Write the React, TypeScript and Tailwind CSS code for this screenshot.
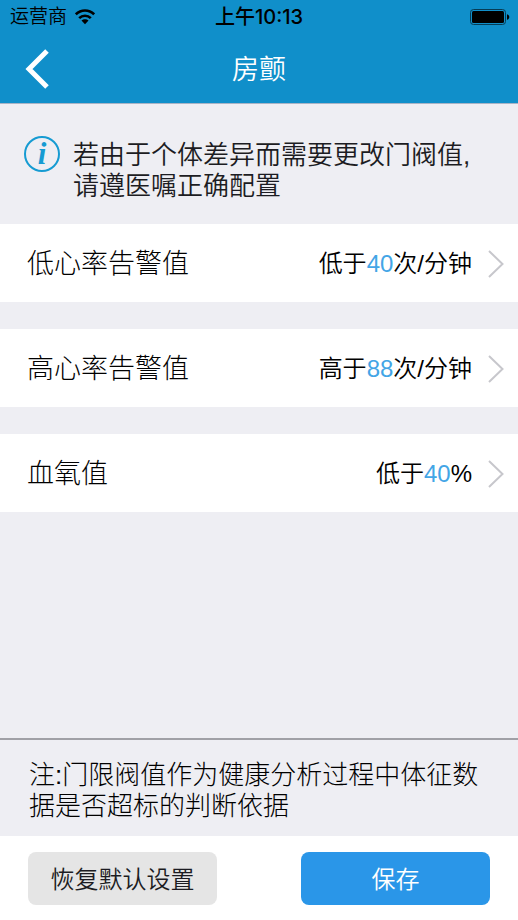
import React, { useState } from 'react';

interface Threshold {
  id: string;
  label: string;
  prefix: string;
  value: number;
  unit: string;
}

const defaults: Threshold[] = [
  { id: 'low', label: '低心率告警值', prefix: '低于', value: 40, unit: '次/分钟' },
  { id: 'high', label: '高心率告警值', prefix: '高于', value: 88, unit: '次/分钟' },
  { id: 'spo2', label: '血氧值', prefix: '低于', value: 40, unit: '%' },
];

const StatusBar = () => (
  <div className="grid grid-cols-[1fr_auto_1fr] items-center h-[34px] px-2 text-[19px] leading-[34px] text-black font-['Inter','Noto_Sans_CJK_SC',sans-serif]">
    <div className="flex items-center gap-2 pl-0.5">
      <span className="font-[350]">运营商</span>
      <svg className="w-5 h-4" viewBox="0 0 20 16" fill="none" stroke="currentColor" aria-hidden="true">
        <path d="M.8 5.400C6 .2 14 .2 19.200 5.400" strokeWidth="2.700" />
        <path d="M4.200 9.200c3.200-3.200 8.400-3.200 11.600 0" strokeWidth="2.600" />
        <path d="M10 15.200 6.500 11.600c1.900-1.900 5.100-1.900 7 0z" fill="currentColor" stroke="none" />
      </svg>
    </div>
    <div className="text-center text-xl leading-[34px] font-medium whitespace-nowrap">上午10:13</div>
    <svg className="w-10 h-4 justify-self-end" viewBox="0 0 40 16" aria-hidden="true">
      <rect x="0.5" y="0.5" width="35" height="15" rx="3" fill="none" stroke="#063c55" />
      <rect x="2" y="2" width="32" height="12" rx="1.500" fill="#000" />
      <path d="M37 5.200c3 .6 3 5 0 5.600z" fill="#000" />
    </svg>
  </div>
);

const Header = () => (
  <header className="bg-[#108fca] border-b border-[#a9b4c6]">
    <StatusBar />
    <div className="grid grid-cols-3 items-center h-[69px] px-6">
      <button type="button" aria-label="返回" className="justify-self-start text-white">
        <svg className="w-[26px] h-10" viewBox="0 0 26 40" fill="none" stroke="currentColor" strokeWidth="5" aria-hidden="true">
          <path d="M23 2 5 20 23 38" />
        </svg>
      </button>
      <h1 className="pt-1 text-center text-[27px] font-[350] text-white">房颤</h1>
    </div>
  </header>
);

const ThresholdRow = ({ item }: { item: Threshold }) => (
  <button type="button" className="flex items-center w-full h-[78px] pt-0.5 pl-[27px] pr-3.5 bg-white text-left">
    <span className="flex-1 text-[27px] font-light text-black">{item.label}</span>
    <span className="text-2xl font-[350] text-black">
      {item.prefix}
      <span className="text-[#43a5e6]">{item.value}</span>
      {item.unit}
    </span>
    <svg className="ml-4 w-4 h-7" viewBox="0 0 16 28" fill="none" stroke="#c7c7cc" strokeWidth="2" aria-hidden="true">
      <path d="M1 1 14.500 14 1 27" />
    </svg>
  </button>
);

const App: React.FC = () => {
  const [items, setItems] = useState(defaults);

  return (
    <div className="flex flex-col min-h-screen bg-[#eeeef3] font-['Liberation_Sans','Noto_Sans_CJK_SC',sans-serif]">
      <Header />
      <main className="flex-1">
        <div className="flex items-start gap-[13px] pl-6 pr-7 pt-8 pb-[22px]">
          <span
            className="flex shrink-0 items-center justify-center w-9 h-9 rounded-full border-2 border-[#169bd2] text-[31px] leading-8 font-bold italic text-[#169bd2] font-['Liberation_Serif',serif]"
            aria-hidden="true"
          >
            i
          </span>
          <p className="pt-1 text-[26px] leading-[31px] font-[350] text-[#1c1c22]">
            若由于个体差异而需要更改门阀值,请遵医嘱正确配置
          </p>
        </div>
        <div className="flex flex-col gap-[27px]">
          {items.map((item) => (
            <ThresholdRow key={item.id} item={item} />
          ))}
        </div>
      </main>
      <footer>
        <p className="border-t-2 border-[#a0a0a6] pl-[29px] pr-7 pt-5 pb-3.5 text-[26px] leading-[31px] font-light text-black">
          注:门限阀值作为健康分析过程中体征数据是否超标的判断依据
        </p>
        <div className="grid grid-cols-2 gap-[84px] px-7 pt-4 pb-[15px] bg-white text-2xl font-[350]">
          <button
            type="button"
            onClick={() => setItems(defaults)}
            className="h-[53px] pt-0.5 rounded-lg bg-[#e5e5e5] text-[#1c1c22] whitespace-nowrap"
          >
            恢复默认设置
          </button>
          <button type="button" className="h-[53px] pt-0.5 rounded-lg bg-[#2a96e8] text-white">
            保存
          </button>
        </div>
      </footer>
    </div>
  );
};

export default App;
